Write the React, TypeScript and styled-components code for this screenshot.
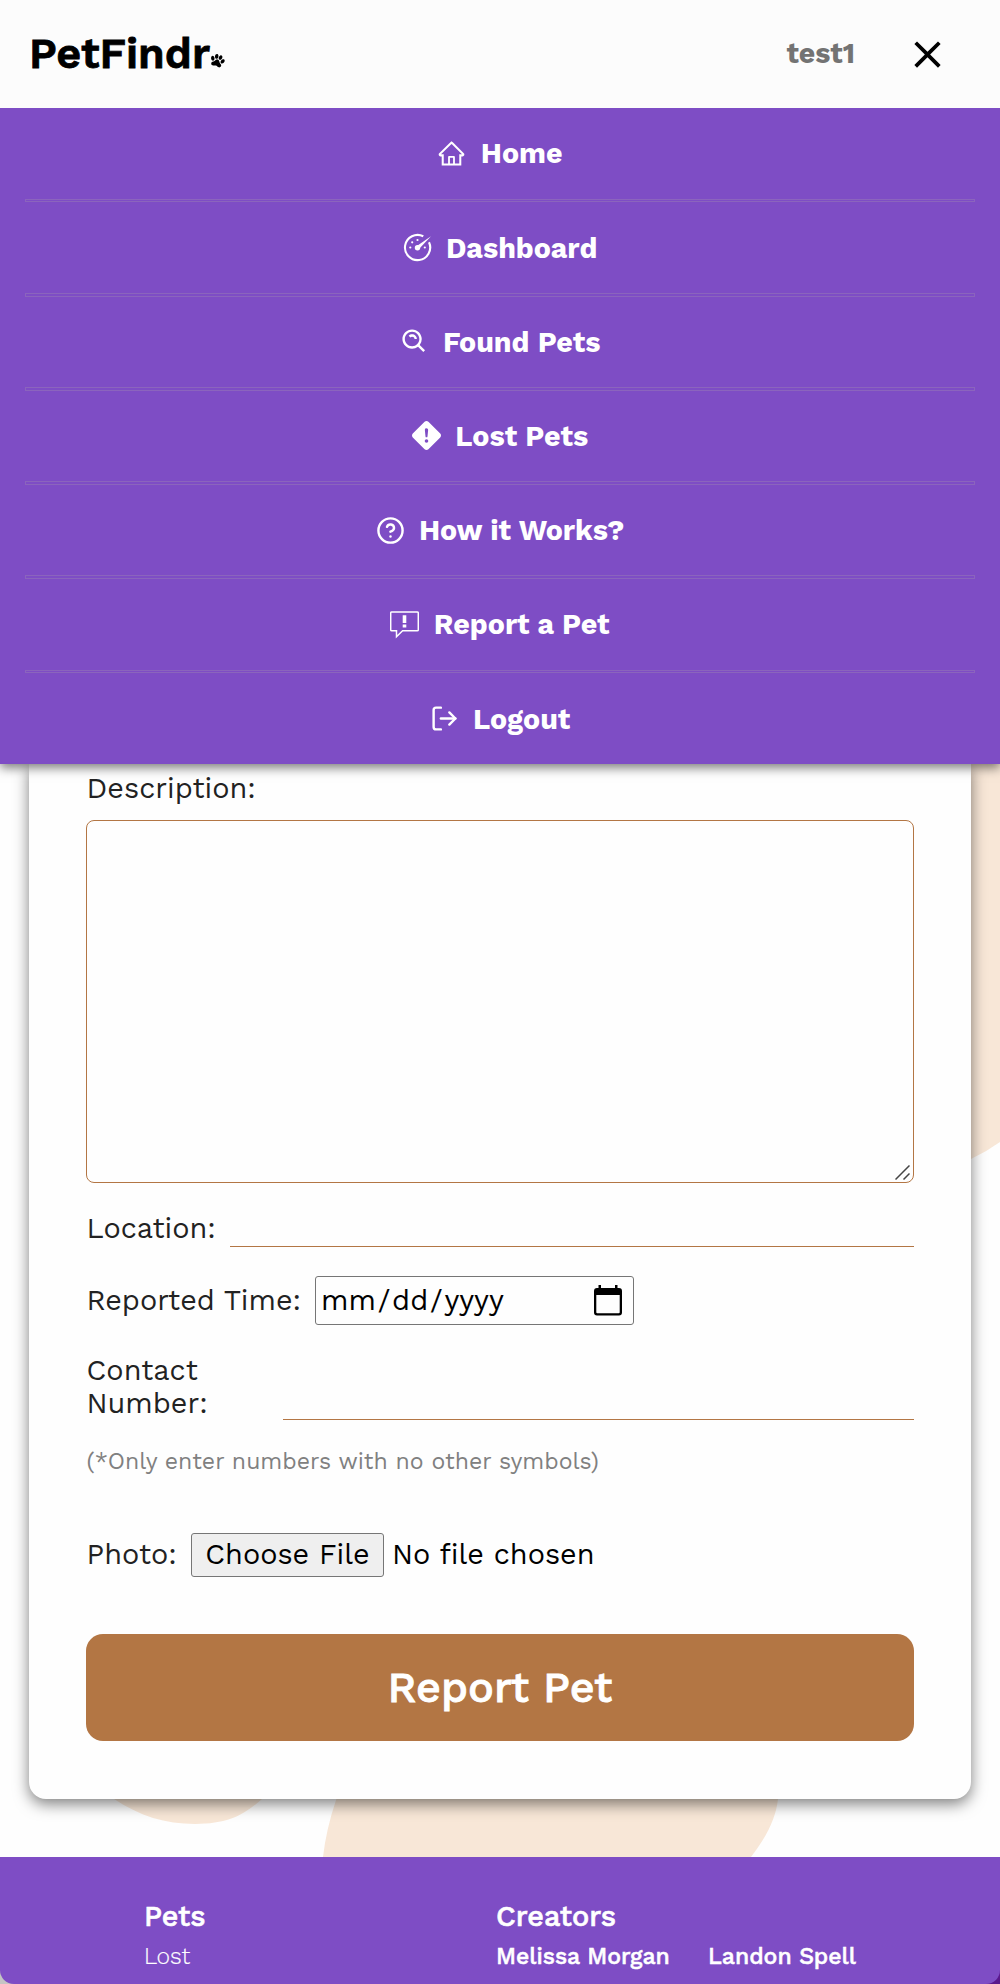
import React from "react";
import styled, { createGlobalStyle } from "styled-components";
import { AiOutlineHome } from "react-icons/ai";
import { BiSearchAlt } from "react-icons/bi";
import { BsFillExclamationDiamondFill } from "react-icons/bs";
import { FiHelpCircle, FiLogOut } from "react-icons/fi";
import { MdClose } from "react-icons/md";
import { IoPaw } from "react-icons/io5";

const Global = createGlobalStyle`
  *, *::before, *::after { box-sizing: border-box; }
  body {
    margin: 0;
    background: #fefefe;
    font-family: "Work Sans", Inter, sans-serif;
    font-size: 28.8px;
    color: #222;
  }
`;

const Page = styled.div`
  width: 1000px;
  height: 1984px;
  overflow: hidden;
  position: relative;
  display: flex;
  flex-direction: column;
`;
const Blobs = styled.svg`
  position: absolute;
  inset: 0;
  z-index: -1;
`;
const Header = styled.header`
  height: 108px;
  flex: none;
  background: #fcfcfc;
  display: flex;
  align-items: center;
  padding: 0 50px 0 29px;
  position: relative;
  z-index: 3;
`;
const Text = styled.span<{ $size?: number; $weight?: number; $stroke?: number }>`
  font-size: ${(p) => p.$size ?? 28.8}px;
  font-weight: ${(p) => p.$weight ?? 400};
  -webkit-text-stroke: ${(p) => p.$stroke ?? 0}px currentColor;
  white-space: nowrap;
`;
const Logo = styled.div`
  display: flex;
  align-items: flex-end;
  color: #000;
  flex: 1;
  line-height: 50px;
  padding-bottom: 2px;
  svg {
    margin-bottom: 10px;
    transform: rotate(18deg);
  }
`;
const User = styled.div`
  color: #737373;
  margin-right: 50px;
  padding-bottom: 2px;
`;
const Close = styled.button`
  border: 0;
  background: none;
  padding: 0;
  display: flex;
  color: #000;
`;
const Menu = styled.nav`
  height: 656px;
  flex: none;
  background: #7e4dc5;
  padding: 0 25px;
  box-shadow: 0 4px 10px rgba(0, 0, 0, 0.5);
  position: relative;
  z-index: 2;
`;
const MenuItem = styled.a`
  height: 90.6px;
  display: flex;
  align-items: center;
  justify-content: center;
  gap: 14.4px;
  color: #fff;
`;
const Rule = styled.hr`
  height: 3.8px;
  margin: 0 0 -0.2px;
  border: 1px solid #8b64bd;
`;
const Card = styled.form`
  margin: 0 29px;
  height: 1035px;
  flex: none;
  background: #fefefe;
  border-radius: 0 0 17px 17px;
  box-shadow: 0 5px 15px rgba(0, 0, 0, 0.5);
  padding: 5px 57px 0;
  display: flex;
  flex-direction: column;
`;
const Label = styled.label`
  height: 39px;
  line-height: 39px;
  padding-left: 0.6px;
`;
const AreaWrap = styled.div`
  position: relative;
  margin-top: 12px;
  height: 363px;
  svg {
    position: absolute;
    right: 4px;
    bottom: 3px;
  }
`;
const Area = styled.textarea`
  display: block;
  width: 100%;
  height: 100%;
  border: 1px solid #b37644;
  border-radius: 8px;
  background: #fefefe;
  resize: none;
  outline: none;
`;
const Field = styled.div<{ $h: number; $top: number }>`
  display: flex;
  align-items: stretch;
  height: ${(p) => p.$h}px;
  margin-top: ${(p) => p.$top}px;
  line-height: 33px;
`;
const LabelCol = styled.label<{ $width: number; $pad?: number }>`
  width: ${(p) => p.$width}px;
  flex: none;
  padding: ${(p) => p.$pad ?? 0}px 0 0 0.6px;
`;
const Line = styled.input`
  flex: 1;
  border: 0;
  border-bottom: 1px solid #b37644;
  background: none;
  outline: none;
`;
const DateBox = styled.div`
  width: 319px;
  border: 1px solid #767676;
  border-radius: 3px;
  display: flex;
  align-items: center;
  justify-content: space-between;
  padding: 0 11.5px 0 5px;
  color: #000;
  svg {
    margin-bottom: 1px;
  }
`;
const Slash = styled.span`
  margin: 0 1.8px;
`;
const Hint = styled.p`
  margin: 25px 0 0;
  padding-left: 0.6px;
  height: 34px;
  line-height: 34px;
  font-size: 23.04px;
  color: #808080;
`;
const FileButton = styled.button`
  width: 193px;
  height: 44px;
  border: 1px solid #767676;
  border-radius: 3px;
  background: #efefef;
  color: #000;
  font-family: inherit;
  padding: 0 0 2px;
`;
const FileName = styled.span`
  margin-left: 8px;
  line-height: 43px;
  color: #000;
`;
const Submit = styled.button`
  margin-top: 57px;
  height: 107px;
  border: 0;
  border-radius: 17px;
  background: #b37644;
  color: #fff;
  font-family: inherit;
  padding: 0 0 2px;
`;
const FooterWrap = styled.div`
  margin-top: 58px;
  flex: 1;
  background: linear-gradient(90deg, #c4c4c4 50%, #5a188c 50%);
`;
const Footer = styled.footer`
  height: 100%;
  background: #7e4dc5;
  border-radius: 0 0 14px 14px;
  color: #fff;
  display: grid;
  grid-template-columns: 352px 1fr;
  padding: 40px 0 0 144px;
`;
const Column = styled.div`
  display: flex;
  flex-direction: column;
`;
const FootRow = styled.div<{ $h: number }>`
  display: flex;
  height: ${(p) => p.$h}px;
  line-height: ${(p) => p.$h}px;
`;
const Name = styled.a`
  width: 212px;
`;

type IconProps = { size?: number };

const Speedometer = ({ size = 29 }: IconProps) => (
  <svg width={size} height={size} viewBox="0 0 29 29" fill="none" stroke="currentColor">
    <path d="M20.300 3.300A12.600 12.600 0 1 0 26 9.200" strokeWidth="2.100" />
    <path d="M13.500 13.300L28 3.200L16 16z" fill="currentColor" stroke="none" />
    <g fill="currentColor" stroke="none">
      <circle cx="14.500" cy="14.800" r="2.700" />
      <circle cx="7.300" cy="14.500" r="1.100" />
      <circle cx="9.200" cy="9.300" r="1.100" />
      <circle cx="14.500" cy="7" r="1.100" />
      <circle cx="21.800" cy="14.500" r="1.100" />
    </g>
  </svg>
);

const ReportBubble = ({ size = 29 }: IconProps) => (
  <svg width={size} height={size} viewBox="0 0 29 29" fill="none" stroke="currentColor">
    <path
      d="M1.700 2H27.300Q28.300 2 28.300 3V19.800Q28.300 20.800 27.300 20.800H12.600L6.500 26.700V20.800H1.700Q.7 20.800 .7 19.800V3Q.7 2 1.700 2z"
      strokeWidth="1.500"
    />
    <path d="M12.700 5.200h3.600v7.800h-3.600zM12.700 14.600h3.600v2.900h-3.600z" fill="currentColor" stroke="none" />
  </svg>
);

const items = [
  { label: "Home", Icon: AiOutlineHome },
  { label: "Dashboard", Icon: Speedometer },
  { label: "Found Pets", Icon: BiSearchAlt },
  { label: "Lost Pets", Icon: BsFillExclamationDiamondFill },
  { label: "How it Works?", Icon: FiHelpCircle },
  { label: "Report a Pet", Icon: ReportBubble },
  { label: "Logout", Icon: FiLogOut },
];

export default function App() {
  return (
    <Page>
      <Global />
      <Blobs width="1000" height="1984" viewBox="0 0 1000 1984" fill="#f8e7d7">
        <path d="M900 700H1000V1142Q986 1152 971 1159L900 1180Z" />
        <path d="M90 1780L114 1799C140 1816 165 1824 195 1824C228 1824 244 1815 262 1799L280 1780Z" />
        <path d="M345 1780L336 1800Q326 1830 323 1857V1900H720L751 1857C768 1835 776 1817 778 1799V1780Z" />
      </Blobs>
      <Header>
        <Logo>
          <Text $size={43.2} $weight={600} $stroke={0.8}>PetFindr</Text>
          <IoPaw size={15} />
        </Logo>
        <User><Text $size={28.4} $weight={700}>test1</Text></User>
        <Close type="button"><MdClose size={45} /></Close>
      </Header>
      <Menu>
        {items.map(({ label, Icon }, i) => (
          <React.Fragment key={label}>
            {i > 0 && <Rule />}
            <MenuItem>
              <Icon size={29} />
              <Text $size={28.6} $weight={700}>{label}</Text>
            </MenuItem>
          </React.Fragment>
        ))}
      </Menu>
      <Card>
        <Label><Text>Description:</Text></Label>
        <AreaWrap>
          <Area />
          <svg width="15" height="15" viewBox="0 0 15 15" stroke="#444" strokeWidth="1.500">
            <path d="M.5 14.500L14.500 .5M8.500 14.500L14.500 8.500" />
          </svg>
        </AreaWrap>
        <Field $h={37} $top={27}>
          <LabelCol $width={144} $pad={2}><Text>Location:</Text></LabelCol>
          <Line />
        </Field>
        <Field $h={49} $top={29}>
          <LabelCol $width={229} $pad={8}><Text>Reported Time:</Text></LabelCol>
          <DateBox>
            <Text>mm<Slash>/</Slash>dd<Slash>/</Slash>yyyy</Text>
            <svg width="28" height="31" viewBox="0 0 28 31">
              <path d="M4.500 0h2.500v3h14V0h2.500v3h1.500a3 3 0 0 1 3 3v21.500a3 3 0 0 1-3 3H3a3 3 0 0 1-3-3V6a3 3 0 0 1 3-3h1.500zM2.300 10v17.200a1 1 0 0 0 1 1h21.400a1 1 0 0 0 1-1V10z" />
            </svg>
          </DateBox>
        </Field>
        <Field $h={66} $top={29}>
          <LabelCol $width={197}><Text>Contact<br />Number:</Text></LabelCol>
          <Line />
        </Field>
        <Hint>(*Only enter numbers with no other symbols)</Hint>
        <Field $h={44} $top={54}>
          <LabelCol $width={105} $pad={5}><Text>Photo:</Text></LabelCol>
          <FileButton type="button"><Text>Choose File</Text></FileButton>
          <FileName><Text>No file chosen</Text></FileName>
        </Field>
        <Submit type="button"><Text $size={43.2} $weight={500} $stroke={0.8}>Report Pet</Text></Submit>
      </Card>
      <FooterWrap>
        <Footer>
          <Column>
            <FootRow $h={38}><Text $weight={500} $stroke={0.6}>Pets</Text></FootRow>
            <FootRow $h={43}><Text $size={23.04} $weight={300} $stroke={0.2}>Lost</Text></FootRow>
          </Column>
          <Column>
            <FootRow $h={38}><Text $weight={500} $stroke={0.6}>Creators</Text></FootRow>
            <FootRow $h={39}>
              <Name><Text $size={23.04} $weight={500} $stroke={0.5}>Melissa Morgan</Text></Name>
              <Name><Text $size={23.04} $weight={500} $stroke={0.5}>Landon Spell</Text></Name>
            </FootRow>
          </Column>
        </Footer>
      </FooterWrap>
    </Page>
  );
}
